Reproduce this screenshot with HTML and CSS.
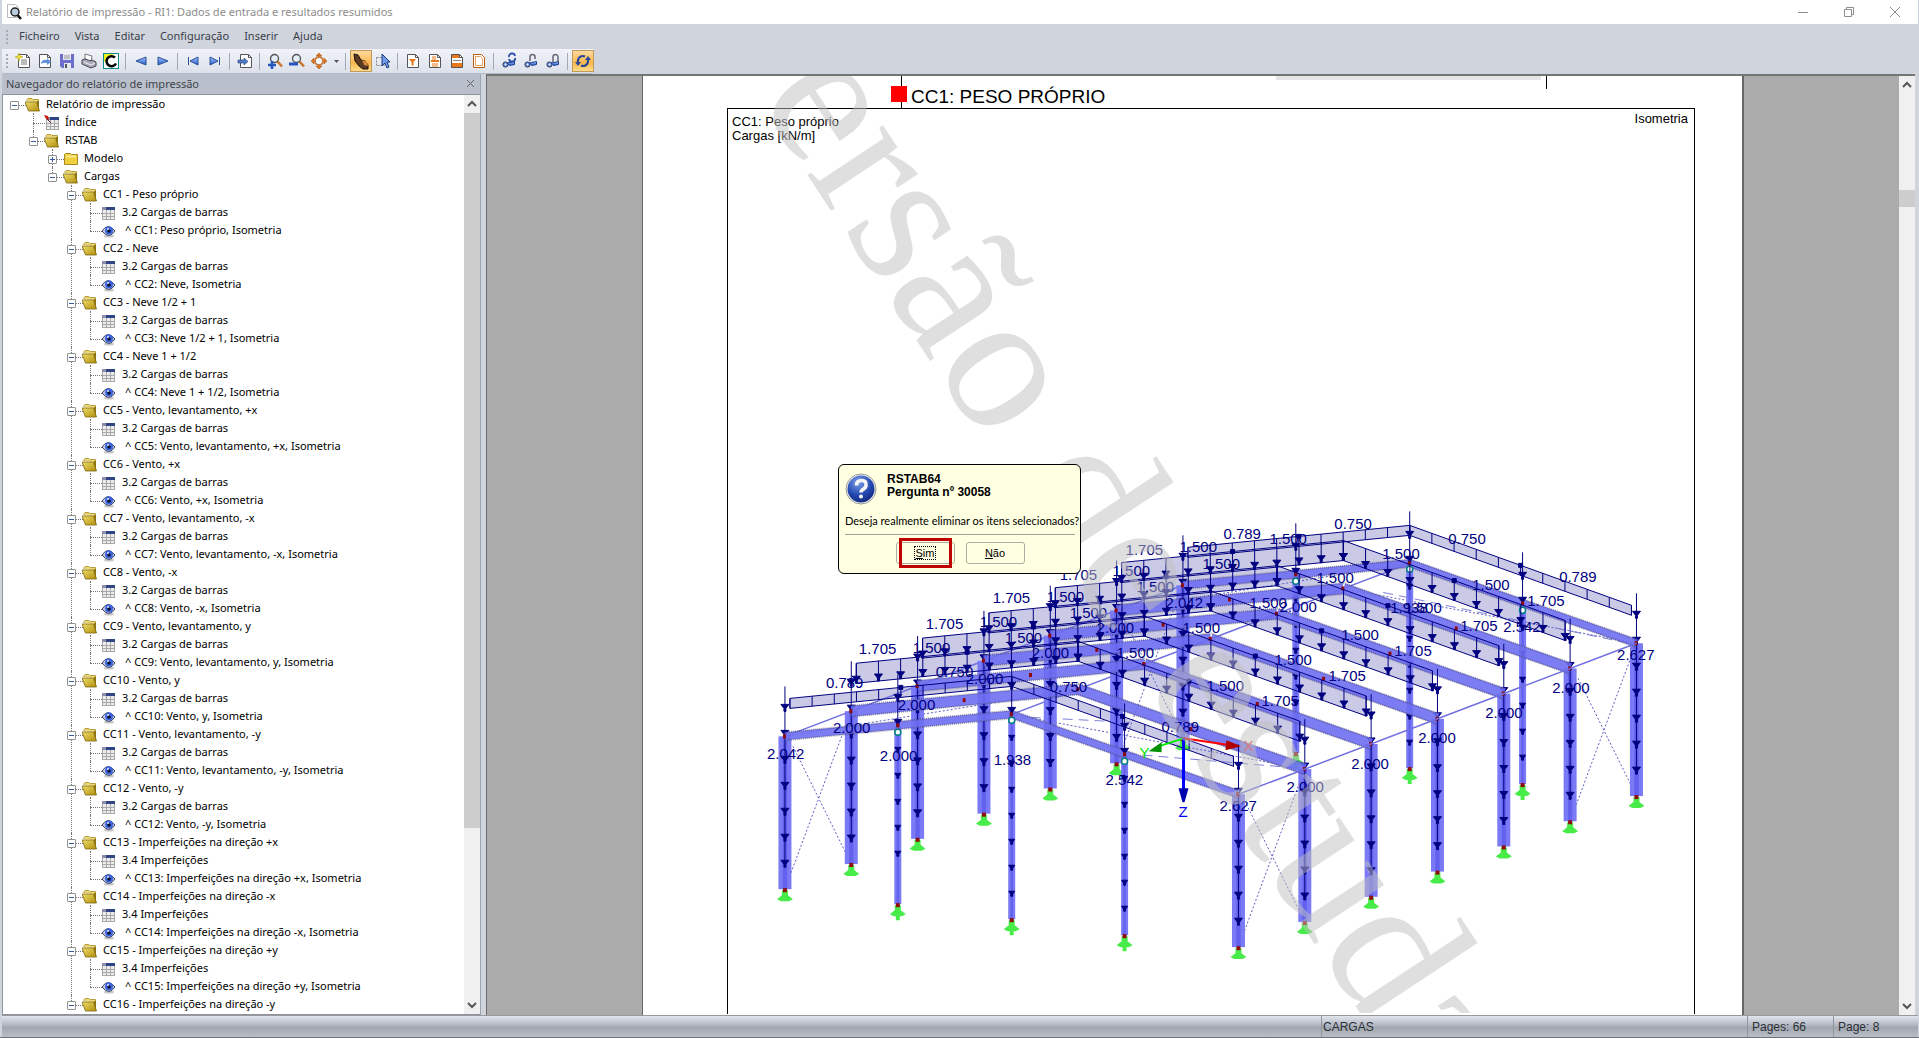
FILE: index.html
```html
<!DOCTYPE html>
<html lang="pt">
<head>
<meta charset="utf-8">
<title>Relatório de impressão</title>
<link rel="stylesheet" href="styles.css">
</head>
<body>
<svg class="sprite" aria-hidden="true">
  <defs>
    <linearGradient id="gold" x1="0" y1="0" x2="1" y2="1"><stop offset="0" stop-color="#f0df6a"/><stop offset="1" stop-color="#b08c0c"/></linearGradient>
    <linearGradient id="blue" x1="0" y1="0" x2="0" y2="1"><stop offset="0" stop-color="#a9c8ff"/><stop offset="1" stop-color="#2458c8"/></linearGradient>
    <radialGradient id="ball" cx=".4" cy=".25" r=".8"><stop offset="0" stop-color="#7f9fea"/><stop offset=".6" stop-color="#2348b0"/><stop offset="1" stop-color="#12277a"/></radialGradient>
  </defs>
  <symbol id="folder-open" viewBox="0 0 16 16"><path d="M2 4V2.500L3 1.500h4l1 1h5.500V5" fill="#ecd66c" stroke="#a58c28" stroke-width=".8"/><path d="M12 4h2v9h-2z" fill="#8f7710"/><path d="M0 5h11.500l3 9H3.500z" fill="url(#gold)" stroke="#7d6710" stroke-width=".8"/></symbol>
  <symbol id="folder" viewBox="0 0 16 16"><path d="M1.500 13.500V3.500l1-1h5l1 1h6v10z" fill="#f0cf3c" stroke="#a88a24"/><path d="M3 5.500h10" stroke="#f9e98f" stroke-width="2"/></symbol>
  <symbol id="table" viewBox="0 0 16 16"><rect x="1" y="2" width="13" height="13" fill="#ececec"/><path d="M5.500 5v10M9.500 5v10M13.500 5v10M1.500 5v10M1 8.500h13M1 11.500h13M1 14.500h13" stroke="#a8a8a8" fill="none"/><path d="M1 2h13v3H1z" fill="#2f4484"/><path d="M1 3.500h4" stroke="#8790a8" stroke-width="3"/></symbol>
  <symbol id="table-pin" viewBox="0 0 16 16"><use href="#table" x="1"/><path d="M0 0l4 1 1 4-3-1z" fill="#d01818"/><path d="M3 4l4 4" stroke="#602020"/></symbol>
  <symbol id="eye" viewBox="0 0 16 16"><ellipse cx="8" cy="13" rx="5" ry="1.500" fill="#c8c8c8"/><path d="M1 8q6-9 13 0q-6 9-13 0z" fill="#c3cbe2" stroke="#3c4660"/><circle cx="8" cy="7.500" r="4" fill="#3f64df"/><circle cx="8" cy="8" r="1.800" fill="#0a1230"/><circle cx="7" cy="6" r="1" fill="#dbe6ff"/></symbol>
  <symbol id="doc" viewBox="0 0 16 16"><path d="M2.500 1.500h8l3 3v10h-11z" fill="#fff" stroke="#555"/><path d="M10.500 1.500v3h3" fill="none" stroke="#555"/></symbol>
  <symbol id="glass" viewBox="0 0 16 16"><circle cx="6.500" cy="5.500" r="4" fill="#e4edf8" stroke="#555" stroke-width="1.400"/><path d="M9.500 8.500l4.500 5" stroke="#c8702c" stroke-width="2.400"/></symbol>
  <symbol id="key" viewBox="0 0 16 16"><circle cx="4.500" cy="11.500" r="2.600" fill="#5588e0" stroke="#333d58"/><circle cx="4.500" cy="11.500" r="1" fill="#fff"/><path d="M6.500 10l7-1.500v3l-5 1z" fill="url(#blue)" stroke="#1c3c90"/></symbol>
</svg>

<div class="window">
  <header class="titlebar">
    <svg class="icon" viewBox="0 0 16 16"><path d="M1.500.5h8l3 3v10h-11z" fill="#fff" stroke="#bbb"/><circle cx="9" cy="8" r="4" fill="#bcd" stroke="#222" stroke-width="1.500"/><path d="M11.500 11l3.500 4" stroke="#111" stroke-width="2.500"/></svg>
    <h1 class="title">Relatório de impressão - RI1: Dados de entrada e resultados resumidos</h1>
    <div class="window-buttons">
      <button aria-label="Minimizar"><svg viewBox="0 0 12 12"><path d="M1 6.500h10"/></svg></button>
      <button aria-label="Restaurar"><svg viewBox="0 0 12 12"><path d="M1.500 3.500h7v7h-7zM3.500 3.500v-2h7v7h-2"/></svg></button>
      <button aria-label="Fechar"><svg viewBox="0 0 12 12"><path d="M1 1l10 10M11 1L1 11"/></svg></button>
    </div>
  </header>

  <nav class="menubar">
    <button>Ficheiro</button><button>Vista</button><button>Editar</button><button>Configuração</button><button>Inserir</button><button>Ajuda</button>
  </nav>

  <div class="toolbar">
    <button aria-label="Novo"><svg viewBox="0 0 16 16"><use href="#doc" x="1"/><path d="M6 7h6M6 9h6M6 11h6" stroke="#777"/><path d="M4 0l1 3 3 1-3 1-1 3-1-3-3-1 3-1z" fill="#f4e22c" stroke="#a89a10" stroke-width=".5"/></svg></button>
    <button aria-label="Abrir"><svg viewBox="0 0 16 16"><use href="#doc"/><path d="M4 11q1-5 6-4V5l4 4-4 3v-2q-3-1-6 1z" fill="#5c8fd8"/></svg></button>
    <button aria-label="Guardar"><svg viewBox="0 0 16 16"><path d="M1 1h14v14H3l-2-2z" fill="#6d6dcc"/><path d="M4 1h8v6H4zM5 10h7v5H5z" fill="#e6e6f2"/><path d="M5 3h6M5 5h6" stroke="#999"/><path d="M6 11h2v4H6z" fill="#555"/></svg></button>
    <button aria-label="Imprimir"><svg viewBox="0 0 16 16"><path d="M4 1l7 2-1 6-6-2z" fill="#fff" stroke="#777"/><path d="M1 7l3-1 6 2 1-1 4 2v4l-5 2-9-4z" fill="#aab" stroke="#445"/><path d="M3 9l7 3 4-2" stroke="#eee" fill="none"/></svg></button>
    <button aria-label="Cores"><svg viewBox="0 0 16 16"><path d="M0 0h16v16H0z" fill="#0e8a8a"/><path d="M1 1h14v14H1z" fill="#fff"/><path d="M1 1h10L1 9z" fill="#f0f020"/><path d="M12 4.500a5 5 0 1 0 1 6" stroke="#000" stroke-width="2.500" fill="none"/></svg></button>
    <span class="sep"></span>
    <button aria-label="Anterior"><svg viewBox="0 0 16 16"><path d="M13 4v8L3 8z" fill="url(#blue)" stroke="#2a4f96"/></svg></button>
    <button aria-label="Seguinte"><svg viewBox="0 0 16 16"><path d="M3 4v8l10-4z" fill="url(#blue)" stroke="#2a4f96"/></svg></button>
    <span class="sep"></span>
    <button aria-label="Primeira"><svg viewBox="0 0 16 16"><path d="M13 4v8L5 8zM3.500 4v8" fill="url(#blue)" stroke="#2a4f96"/></svg></button>
    <button aria-label="Última"><svg viewBox="0 0 16 16"><path d="M3 4v8l8-4zM12.500 4v8" fill="url(#blue)" stroke="#2a4f96"/></svg></button>
    <span class="sep"></span>
    <button aria-label="Ir para página"><svg viewBox="0 0 16 16"><use href="#doc" x="1"/><path d="M1 7h6V5l4 3.500L7 12v-2H1z" fill="#4d7dc8" stroke="#223a70" stroke-width=".6"/></svg></button>
    <span class="sep"></span>
    <button aria-label="Ampliar"><svg viewBox="0 0 16 16"><use href="#glass" x="1"/><path d="M5 8v8M1 12h8" stroke="#2454c0" stroke-width="2.600"/></svg></button>
    <button aria-label="Reduzir"><svg viewBox="0 0 16 16"><use href="#glass" x="1"/><path d="M0 11h9" stroke="#2454c0" stroke-width="3"/></svg></button>
    <button aria-label="Ver tudo"><svg viewBox="0 0 16 16"><path d="M8 0l3 3H5zM8 16l3-3H5zM0 8l3-3v6zM16 8l-3-3v6z" fill="#e07820" stroke="#a04c08" stroke-width=".5"/><circle cx="8" cy="8" r="4" fill="#f4f6fa" stroke="#c87838" stroke-width="1.800"/></svg></button>
    <button class="drop" aria-label="Mais"><svg viewBox="0 0 8 8"><path d="M2 3h5L4.500 6z" fill="#555"/></svg></button>
    <span class="sep"></span>
    <button class="on" aria-label="Mover"><svg viewBox="0 0 16 16"><path d="M1 1l4 1 3 5 4 1 3 4v4h-5l-4-3-4-5z" fill="#5a3a22" stroke="#1e1208"/><path d="M9 7l5 2 1 4-4-1z" fill="#d88c3a"/></svg></button>
    <button aria-label="Selecionar"><svg viewBox="0 0 16 16"><path d="M1.500 4.500h8v8h-8z" fill="none" stroke="#888" stroke-dasharray="2 1"/><path d="M7 1v12l3-3 2 5 2-1-2-5h3z" fill="#6f9be6" stroke="#1e3a80"/></svg></button>
    <span class="sep"></span>
    <button aria-label="Filtro"><svg viewBox="0 0 16 16"><use href="#doc"/><path d="M4 6h7L8.500 9v4l-2-1V9z" fill="#e87818"/></svg></button>
    <button aria-label="Índice"><svg viewBox="0 0 16 16"><use href="#doc"/><path d="M5 4h4M5 6h4M5 11h6M5 13h6" stroke="#e87818"/><path d="M4 8h8" stroke="#e87818" stroke-width="2"/></svg></button>
    <button aria-label="Cabeçalho"><svg viewBox="0 0 16 16"><use href="#doc"/><path d="M3 2h7v3H3zM3 10h10v4H3z" fill="#e87818"/><path d="M4 7.500h8" stroke="#888"/></svg></button>
    <button aria-label="Margens"><svg viewBox="0 0 16 16"><path d="M2.500 1.500h8l3 3v10h-11z" fill="#fff" stroke="#b85c10"/><path d="M4.500 3.500h5l2 2v7h-7z" fill="#fff" stroke="#e8a060"/></svg></button>
    <span class="sep"></span>
    <button aria-label="Atualizar ligação"><svg viewBox="0 0 16 16"><use href="#key"/><path d="M8 4a3 3 0 0 1 6-1M14 5a3 3 0 0 1-6 1" stroke="#2b50a8" stroke-width="1.800" fill="none"/></svg></button>
    <button aria-label="Desbloquear"><svg viewBox="0 0 16 16"><use href="#key"/><path d="M7 8V4a2.500 2.500 0 0 1 5 0v2" stroke="#667" stroke-width="1.500" fill="none"/></svg></button>
    <button aria-label="Bloquear"><svg viewBox="0 0 16 16"><use href="#key"/><path d="M8 9V4a2.500 2.500 0 0 1 5 0v5" stroke="#667" stroke-width="1.500" fill="none"/></svg></button>
    <span class="sep"></span>
    <button class="on" aria-label="Atualizar"><svg viewBox="0 0 16 16"><path d="M3 10V7a5 5 0 0 1 7-3.500M13 6v3a5 5 0 0 1-7 3.500" stroke="#28489a" stroke-width="2.200" fill="none"/><path d="M0 9h6l-3 4zM10 7h6l-3-4z" fill="#28489a"/></svg></button>
  </div>

  <div class="workspace">
    <aside class="navigator">
      <div class="panel-title"><h2>Navegador do relatório de impressão</h2><button aria-label="Fechar painel"><svg viewBox="0 0 12 12"><path d="M2 2l7 7M9 2L2 9"/></svg></button></div>
      <div class="panel-body">
        <ul class="tree">
          <li><div class="row"><button class="exp" aria-label="Recolher"></button><svg><use href="#folder-open"/></svg>Relatório de impressão</div>
            <ul>
              <li><div class="row leaf"><svg><use href="#table-pin"/></svg>Índice</div></li>
              <li><div class="row"><button class="exp" aria-label="Recolher"></button><svg><use href="#folder-open"/></svg>RSTAB</div>
                <ul>
                  <li><div class="row"><button class="exp plus" aria-label="Expandir"></button><svg><use href="#folder"/></svg>Modelo</div></li>
                  <li><div class="row"><button class="exp" aria-label="Recolher"></button><svg><use href="#folder-open"/></svg>Cargas</div>
                    <ul>
                      <li><div class="row"><button class="exp" aria-label="Recolher"></button><svg><use href="#folder-open"/></svg>CC1 - Peso próprio</div><ul><li><div class="row leaf"><svg><use href="#table"/></svg>3.2 Cargas de barras</div></li><li><div class="row leaf view"><svg><use href="#eye"/></svg>^ CC1: Peso próprio, Isometria</div></li></ul></li>
                      <li><div class="row"><button class="exp" aria-label="Recolher"></button><svg><use href="#folder-open"/></svg>CC2 - Neve</div><ul><li><div class="row leaf"><svg><use href="#table"/></svg>3.2 Cargas de barras</div></li><li><div class="row leaf view"><svg><use href="#eye"/></svg>^ CC2: Neve, Isometria</div></li></ul></li>
                      <li><div class="row"><button class="exp" aria-label="Recolher"></button><svg><use href="#folder-open"/></svg>CC3 - Neve 1/2 + 1</div><ul><li><div class="row leaf"><svg><use href="#table"/></svg>3.2 Cargas de barras</div></li><li><div class="row leaf view"><svg><use href="#eye"/></svg>^ CC3: Neve 1/2 + 1, Isometria</div></li></ul></li>
                      <li><div class="row"><button class="exp" aria-label="Recolher"></button><svg><use href="#folder-open"/></svg>CC4 - Neve 1 + 1/2</div><ul><li><div class="row leaf"><svg><use href="#table"/></svg>3.2 Cargas de barras</div></li><li><div class="row leaf view"><svg><use href="#eye"/></svg>^ CC4: Neve 1 + 1/2, Isometria</div></li></ul></li>
                      <li><div class="row"><button class="exp" aria-label="Recolher"></button><svg><use href="#folder-open"/></svg>CC5 - Vento, levantamento, +x</div><ul><li><div class="row leaf"><svg><use href="#table"/></svg>3.2 Cargas de barras</div></li><li><div class="row leaf view"><svg><use href="#eye"/></svg>^ CC5: Vento, levantamento, +x, Isometria</div></li></ul></li>
                      <li><div class="row"><button class="exp" aria-label="Recolher"></button><svg><use href="#folder-open"/></svg>CC6 - Vento, +x</div><ul><li><div class="row leaf"><svg><use href="#table"/></svg>3.2 Cargas de barras</div></li><li><div class="row leaf view"><svg><use href="#eye"/></svg>^ CC6: Vento, +x, Isometria</div></li></ul></li>
                      <li><div class="row"><button class="exp" aria-label="Recolher"></button><svg><use href="#folder-open"/></svg>CC7 - Vento, levantamento, -x</div><ul><li><div class="row leaf"><svg><use href="#table"/></svg>3.2 Cargas de barras</div></li><li><div class="row leaf view"><svg><use href="#eye"/></svg>^ CC7: Vento, levantamento, -x, Isometria</div></li></ul></li>
                      <li><div class="row"><button class="exp" aria-label="Recolher"></button><svg><use href="#folder-open"/></svg>CC8 - Vento, -x</div><ul><li><div class="row leaf"><svg><use href="#table"/></svg>3.2 Cargas de barras</div></li><li><div class="row leaf view"><svg><use href="#eye"/></svg>^ CC8: Vento, -x, Isometria</div></li></ul></li>
                      <li><div class="row"><button class="exp" aria-label="Recolher"></button><svg><use href="#folder-open"/></svg>CC9 - Vento, levantamento, y</div><ul><li><div class="row leaf"><svg><use href="#table"/></svg>3.2 Cargas de barras</div></li><li><div class="row leaf view"><svg><use href="#eye"/></svg>^ CC9: Vento, levantamento, y, Isometria</div></li></ul></li>
                      <li><div class="row"><button class="exp" aria-label="Recolher"></button><svg><use href="#folder-open"/></svg>CC10 - Vento, y</div><ul><li><div class="row leaf"><svg><use href="#table"/></svg>3.2 Cargas de barras</div></li><li><div class="row leaf view"><svg><use href="#eye"/></svg>^ CC10: Vento, y, Isometria</div></li></ul></li>
                      <li><div class="row"><button class="exp" aria-label="Recolher"></button><svg><use href="#folder-open"/></svg>CC11 - Vento, levantamento, -y</div><ul><li><div class="row leaf"><svg><use href="#table"/></svg>3.2 Cargas de barras</div></li><li><div class="row leaf view"><svg><use href="#eye"/></svg>^ CC11: Vento, levantamento, -y, Isometria</div></li></ul></li>
                      <li><div class="row"><button class="exp" aria-label="Recolher"></button><svg><use href="#folder-open"/></svg>CC12 - Vento, -y</div><ul><li><div class="row leaf"><svg><use href="#table"/></svg>3.2 Cargas de barras</div></li><li><div class="row leaf view"><svg><use href="#eye"/></svg>^ CC12: Vento, -y, Isometria</div></li></ul></li>
                      <li><div class="row"><button class="exp" aria-label="Recolher"></button><svg><use href="#folder-open"/></svg>CC13 - Imperfeições na direção +x</div><ul><li><div class="row leaf"><svg><use href="#table"/></svg>3.4 Imperfeições</div></li><li><div class="row leaf view"><svg><use href="#eye"/></svg>^ CC13: Imperfeições na direção +x, Isometria</div></li></ul></li>
                      <li><div class="row"><button class="exp" aria-label="Recolher"></button><svg><use href="#folder-open"/></svg>CC14 - Imperfeições na direção -x</div><ul><li><div class="row leaf"><svg><use href="#table"/></svg>3.4 Imperfeições</div></li><li><div class="row leaf view"><svg><use href="#eye"/></svg>^ CC14: Imperfeições na direção -x, Isometria</div></li></ul></li>
                      <li><div class="row"><button class="exp" aria-label="Recolher"></button><svg><use href="#folder-open"/></svg>CC15 - Imperfeições na direção +y</div><ul><li><div class="row leaf"><svg><use href="#table"/></svg>3.4 Imperfeições</div></li><li><div class="row leaf view"><svg><use href="#eye"/></svg>^ CC15: Imperfeições na direção +y, Isometria</div></li></ul></li>
                      <li><div class="row"><button class="exp" aria-label="Recolher"></button><svg><use href="#folder-open"/></svg>CC16 - Imperfeições na direção -y</div></li>
                    </ul>
                  </li>
                </ul>
              </li>
            </ul>
          </li>
        </ul>
        <div class="scrollbar">
          <svg viewBox="0 0 10 10"><path d="M1 7l4-4 4 4"/></svg>
          <div class="track tree-track"><div class="thumb"></div></div>
          <svg viewBox="0 0 10 10"><path d="M1 3l4 4 4-4"/></svg>
        </div>
      </div>
    </aside>

    <main class="viewer">
      <div class="canvas">
        <article class="page">
          <div class="page-head">
            <div class="rule"><span class="marker"></span></div>
            <h2>CC1: PESO PRÓPRIO</h2>
            <div class="previous"></div>
          </div>
          <figure class="frame">
            <figcaption><span>CC1: Peso próprio<br>Cargas [kN/m]</span><span class="view-name">Isometria</span></figcaption>
            <svg class="model" id="model" viewBox="727 108 967 906" role="img" aria-label="Modelo em isometria"></svg>
          </figure>
          <svg class="watermark" viewBox="643 76 1100 938" aria-hidden="true"><text transform="translate(679 -20) rotate(56.600)">Versão de estudante</text></svg>
        </article>
        <section class="dialog" role="dialog" aria-labelledby="dlg-title">
          <div class="dialog-head">
            <svg viewBox="0 0 32 32"><circle cx="16" cy="16" r="15" fill="#f2f2f2" stroke="#999"/><circle cx="16" cy="16" r="13.500" fill="url(#ball)"/><path d="M11.500 12.500q0-5 5-5t4.500 4.500q0 2.500-2.500 4t-2.500 3.500" fill="none" stroke="#f4f4f4" stroke-width="3.600"/><circle cx="16" cy="23.500" r="2" fill="#f4f4f4"/></svg>
            <h3 id="dlg-title">RSTAB64<br>Pergunta nº 30058</h3>
          </div>
          <p>Deseja realmente eliminar os itens selecionados?</p>
          <div class="dialog-actions">
            <button class="yes"><span><u>S</u>im</span></button>
            <button><u>N</u>ão</button>
          </div>
        </section>
      </div>
      <div class="scrollbar">
        <svg viewBox="0 0 10 10"><path d="M1 7l4-4 4 4"/></svg>
        <div class="track page-track"><div class="thumb"></div></div>
        <svg viewBox="0 0 10 10"><path d="M1 3l4 4 4-4"/></svg>
      </div>
    </main>
  </div>

  <footer class="statusbar"><span class="section">CARGAS</span><span class="pages">Pages: 66</span><span class="current">Page: 8</span></footer>
</div>
<script src="model.js"></script>
</body>
</html>
```
FILE: styles.css
```css
* { box-sizing: border-box; }
body { margin: 0; font: 11px/18px "Noto Sans", "Open Sans", sans-serif; color: #000; }
button { margin: 0; padding: 0; border: 0; background: none; font: inherit; color: inherit; }
h1, h2, h3, p, ul, figure { margin: 0; padding: 0; font-size: inherit; font-weight: normal; }
ul { list-style: none; }
.sprite { position: absolute; width: 0; height: 0; }

.window { display: flex; flex-direction: column; height: 100vh; overflow: hidden; padding: 0 1px 0 2px; background: #d0d4dd; border-bottom: 1px solid #6e7278; }
.titlebar { display: flex; align-items: center; flex: none; height: 24px; padding-left: 4px; background: #fff; color: #8c8c8c; }
.titlebar .icon { width: 16px; height: 16px; margin-right: 4px; }
.title { flex: 1; }
.window-buttons { display: flex; }
.window-buttons button { display: flex; align-items: center; justify-content: center; width: 46px; height: 20px; }
.window-buttons svg { width: 12px; height: 12px; fill: none; stroke: #8c8c8c; }

.menubar { display: flex; gap: 15px; flex: none; height: 25px; padding: 3px 0 4px 17px; color: #3a3f4a; }
.toolbar { display: flex; align-items: center; align-self: flex-start; flex: none; height: 25px; padding-left: 10px; background: linear-gradient(#f0f3f9, #dde1ea); border-bottom: 1px solid #b4b9c6; border-radius: 0 0 3px 3px; }
.menubar::before, .toolbar::before { content: ""; width: 2px; height: 14px; background: linear-gradient(#a4aab8 50%, transparent 50%) 0 0 / 2px 4px; }
.menubar::before { margin: 3px -2px 0 -13px; margin-right: -4px; }
.toolbar::before { margin: 0 4px 0 -6px; }
.toolbar button { display: flex; align-items: center; justify-content: center; width: 22px; height: 22px; }
.toolbar svg { width: 16px; height: 16px; overflow: visible; }
.toolbar .drop { width: 12px; }
.toolbar .drop svg { width: 8px; height: 8px; }
.toolbar .on { background: linear-gradient(#fcd9a0, #fbb74c 60%, #fddc8c); border: 1px solid #c29a58; }
.sep { width: 8px; height: 17px; background: linear-gradient(#a4a9b6, #a4a9b6) 3px 0 / 1px 100% no-repeat; }

.workspace { display: flex; flex: 1; min-height: 0; padding: 0 3px 0 0; }
.navigator { display: flex; flex-direction: column; flex: none; width: 479px; margin-right: 5px; border-right: 1px solid #9da3ae; }
.panel-title { display: flex; align-items: center; justify-content: space-between; flex: none; height: 21px; padding: 0 3px 1px 4px; background: #b9c0cb; border-bottom: 1px solid #8e949f; color: #3f434b; }
.panel-title svg { display: block; width: 12px; height: 12px; fill: none; stroke: #666; }
.panel-body { display: flex; flex: 1; min-height: 0; background: #fff; border-left: 1px solid #8e949f; border-bottom: 1px solid #8e949f; }
.tree { flex: 1; overflow: hidden; padding-left: 7px; }
.tree ul { padding-left: 19px; }
.tree li { position: relative; }
.tree ul > li::before { content: ""; position: absolute; left: 4px; top: 0; bottom: 0; border-left: 1px dotted #777; }
.tree ul > li:last-child::before { bottom: auto; height: 10px; }
.row { position: relative; display: flex; align-items: center; height: 18px; white-space: pre; }
.row::before { content: ""; position: absolute; left: 4px; top: 10px; width: 14px; border-top: 1px dotted #777; }
.row svg { position: relative; width: 16px; height: 16px; margin: 1px 5px 0 3px; }
.row.leaf svg { margin-left: 15px; }
.row.view svg { margin-right: 8px; }
.exp { position: relative; width: 9px; height: 9px; margin: 2px 3px 0 0; border: 1px solid #919191; border-radius: 1px; background: linear-gradient(#3b5aa0, #3b5aa0) center / 5px 1px no-repeat, #fff; }
.exp.plus { background: linear-gradient(#3b5aa0, #3b5aa0) center / 5px 1px no-repeat, linear-gradient(#3b5aa0, #3b5aa0) center / 1px 5px no-repeat, #fff; }

.scrollbar { display: flex; flex-direction: column; align-items: center; flex: none; width: 16px; background: #f0f0f0; }
.scrollbar > svg { width: 10px; height: 10px; margin: 4px 0; fill: none; stroke: #555; stroke-width: 2; }
.track { flex: 1; width: 100%; }
.thumb { width: 100%; background: #cdcdcd; }
.tree-track .thumb { height: 81%; }
.page-track { padding-top: 96px; }
.page-track .thumb { height: 17px; }

.viewer { display: flex; flex: 1; min-width: 0; border: solid #6a6a6a; border-width: 2px 0 0 1px; border-top-color: #757575; }
.canvas { position: relative; flex: 1; min-width: 0; overflow: hidden; background: #ababab; }
.page { position: relative; width: 1102px; min-height: 100%; margin: 0 auto; padding: 0 47px 0 84px; background: #fff; border: solid #666; border-width: 0 2px 0 1px; }
.page-head { display: flex; height: 32px; }
.rule { width: 175px; padding-top: 10px; border-right: 1px solid #000; }
.marker { display: block; width: 16px; height: 16px; margin-left: auto; margin-right: -6px; background: #f00; }
.page-head h2 { flex: 1; padding: 8px 0 0 9px; font: 19px/26px "Liberation Sans", Arial, sans-serif; }
.previous { width: 271px; height: 13px; margin-right: 148px; border-right: 1px solid #000; background: linear-gradient(#e6e6e6, #e6e6e6) 0 0 / 265px 4px no-repeat; }
.frame { position: relative; border: 1px solid #000; border-bottom: 0; }
.frame figcaption { position: absolute; left: 4px; right: 6px; top: 6px; display: flex; justify-content: space-between; font: 13px/14px "Liberation Sans", Arial, sans-serif; }
.frame .view-name { margin-top: -3px; }
.model { display: block; width: 100%; font: 15px "Liberation Sans", Arial, sans-serif; }
.watermark { position: absolute; left: 0; top: 0; width: 100%; overflow: hidden; font: 197px "Liberation Serif", "Times New Roman", serif; font-kerning: none; fill: #c0c0c0; opacity: .5; }

.steel { fill: none; stroke: #6e6ef2; stroke-opacity: .9; }
.column { fill: #7a7af6; }
.column-core { fill: #6262ee; }
.thread { fill: none; stroke: #404048; stroke-dasharray: 1 1; stroke-width: 2; opacity: .45; }
.band { fill: #cacae6; }
.outline { fill: none; stroke: #000080; }
.load { fill: #000080; stroke: #000080; stroke-width: 1; }
.tie { fill: none; stroke: #7070e0; stroke-width: 1.500; }
.brace { fill: none; stroke: #5c5cc8; stroke-dasharray: 2 2; }
.gable { fill: none; stroke: #8080d8; stroke-dasharray: 10 6; }
.support { fill: #48ec48; }
.joint { fill: #900c0c; }
.hinge { fill: #fff; stroke: #008080; stroke-width: 1.500; }
.value { fill: #000080; }

.dialog { position: absolute; left: 351px; top: 388px; width: 243px; padding: 8px 5px 8px 6px; border: 1px solid #000; border-radius: 6px; background: #ffffe1; font: 11px/13px "Liberation Sans", Arial, sans-serif; }
.dialog-head { display: flex; gap: 10px; }
.dialog-head svg { width: 32px; height: 32px; }
.dialog-head h3 { font: bold 12px/13px "Liberation Sans", Arial, sans-serif; }
.dialog p { padding: 9px 0 7px; border-bottom: 1px solid #a0a0a0; font-family: Lato, sans-serif; white-space: nowrap; }
.dialog-actions { display: flex; justify-content: center; gap: 11px; padding: 7px 0 1px; }
.dialog-actions button { position: relative; width: 59px; height: 22px; border: 1px solid #adada4; border-radius: 3px; }
.yes::after { content: ""; position: absolute; inset: -5px 2px; border: 3px solid #c00000; }
.yes span { padding: 0 1px; outline: 1px dotted #000; }

.statusbar { display: flex; align-items: stretch; flex: none; height: 22px; border-top: 1px solid #999; background: linear-gradient(#e2e5ec, #b6bbc7 40%, #a2a8b0 55%, #b9bec7); font: 12px/22px "Liberation Sans", Arial, sans-serif; color: #2c2f36; }
.statusbar span { padding-left: 4px; border-left: 1px solid #8f949d; }
.statusbar .section { margin-left: auto; width: 426px; padding-left: 1px; }
.statusbar .pages { width: 86px; }
.statusbar .current { width: 85px; }
```
FILE: model.js
```js
// Draws the hall frame with its self-weight loads in isometric projection.
const svg = document.getElementById('model');
const NS = 'http://www.w3.org/2000/svg';
const add = (tag, cls, attrs, text) => {
  const el = document.createElementNS(NS, tag);
  el.setAttribute('class', cls);
  for (const k in attrs) el.setAttribute(k, attrs[k]);
  if (text) el.textContent = text;
  svg.appendChild(el);
};
const line = (cls, a, b, w) => add('path', cls, { d: `M${a}L${b}`, ...(w ? { 'stroke-width': w } : {}) });
const head = (x, y, s) => `M${x - s} ${y - s}h${2 * s}l${1 - s} ${s}v${s - 1}h-2v${1 - s}z`;
const at = (p, i) => [p[0] + 66.400 * i, p[1] - 25.200 * i];
const LEFT = [784, 736], RIDGE = [1011, 714], RIGHT = [1238, 794];
const H = 153;

function column(p, h, w, upper) {
  const [x, y] = p;
  add('rect', 'column', { x: x - w / 2, y, width: w, height: h });
  add('rect', 'column-core', { x: x - w / 6, y, width: w / 3, height: h });
  add('path', 'support', { d: `M${x - 3} ${y + h + 1}h6v5l5 4l-4 2h-8l-4-2l5-4z` + (w < 9 ? `M${x - 2} ${y + h + 10}h4v6h-4z` : '') });
  add('rect', 'joint', { x: x - 2, y: y + h - 1, width: 4, height: 4 });
  const s = w < 9 ? 3 : 4;
  let d = '';
  for (let t = upper ? -28 : 24; t < h - 24; t += 26) d += head(x, y + t, s);
  add('path', 'load', { d });
  if (upper) line('load', [x, y - 50], [x, y + h - 27], 1);
}

function rafter(a, b, w) {
  line('steel', a, b, w);
  for (const o of [-w / 2, w / 2]) line('thread', [a[0], a[1] + o], [b[0], b[1] + o]);
}

const bandPath = (a, b, high) => `M${a[0]} ${a[1] - 28}L${b[0]} ${b[1] - 28}v${-high}L${a[0]} ${a[1] - 28 - high}z`;

function bandLoads(a, b, high, heads) {
  const n = 10;
  add('path', 'outline', { d: bandPath(a, b, high) });
  let d = '';
  for (let k = 0; k <= n; k++) {
    const x = a[0] + (b[0] - a[0]) * k / n, y = a[1] + (b[1] - a[1]) * k / n - 28;
    d += `M${x} ${y}v${-high}`;
    if (heads) d += head(x, y - 3, 4);
    if (k === 5) d += `M${x - 2} ${y - high - 2}h4v4h-4z`;
  }
  add('path', 'load', { d });
}

const frames = [6, 5, 4, 3, 2, 1, 0].map(i => ({
  l: at(LEFT, i), m: at(RIDGE, i), r: at(RIGHT, i),
  end: i === 0 || i === 6, high: i === 0 || i === 6 ? 10 : 20
}));

for (const { l, m, r, high } of frames) {
  add('path', 'band', { d: bandPath([l[0] + 5, l[1]], m, high) });
  add('path', 'band', { d: bandPath(m, [r[0] - 5, r[1]], high) });
}
line('tie', LEFT, at(LEFT, 6));
line('tie', RIDGE, at(RIDGE, 6));
for (const i of [0, 5]) {
  for (const p of [LEFT, RIGHT]) {
    const a = at(p, i), b = at(p, i + 1);
    line('brace', [a[0] + 8, a[1] + 10], [b[0], b[1] + H]);
    line('brace', [b[0] - 4, b[1] + 10], [a[0], a[1] + H]);
  }
  line('brace', at(LEFT, i), at(RIDGE, i + 1));
  line('brace', at(RIDGE, i), at(RIGHT, i + 1));
}
line('gable', [1030, 717], [1130, 722]);
line('gable', [1110, 752], [1300, 768]);
line('gable', [1383, 592], [1630, 643]);
for (const { l, m, r, end } of frames) {
  const g1 = [l[0] + 113, l[1] - 10], g3 = [m[0] + 113, m[1] + 41];
  if (end) {
    column(g1, 178, 7, false);
    column(m, 205, 7, false);
    column(g3, 180, 7, false);
  }
  column(l, H, 13, true);
  column(r, H, 13, true);
  rafter(l, m, end ? 8 : 11);
  rafter(m, r, end ? 8 : 11);
  if (end) for (const g of [g1, m, g3]) {
    line('load', [g[0], g[1] - 52], g, 1);
    add('path', 'load', { d: head(g[0], g[1] - 28, 4) + head(g[0], g[1] - 3, 4) });
    add('circle', 'hinge', { cx: g[0], cy: g[1] + 6, r: 3 });
  }
  for (const p of [l, m, r, [(l[0] + m[0]) / 2, (l[1] + m[1]) / 2], [(m[0] + r[0]) / 2, (m[1] + r[1]) / 2]])
    add('rect', 'joint', { x: p[0] - 2, y: p[1] - 2, width: 3, height: 4 });
}
line('tie', RIGHT, at(RIGHT, 6));
for (const { l, m, r, end, high } of frames) {
  bandLoads([l[0] + 5, l[1]], m, high, !end);
  bandLoads(m, [r[0] - 5, r[1]], high, !end);
}

// Global axes at the model origin.
add('path', '', { d: 'M1183 738L1230 745', stroke: '#f00', 'stroke-width': 2 });
add('path', '', { d: 'M1226 740l15 6l-16 4z', fill: '#b00000' });
add('path', '', { d: 'M1183 738L1158 746', stroke: '#0e0', 'stroke-width': 2 });
add('path', '', { d: 'M1161 742l-13 9l13 1z', fill: '#009000' });
add('path', '', { d: 'M1183 738V790', stroke: '#00f', 'stroke-width': 3 });
add('path', '', { d: 'M1178 788h10l-4 14h-2z', fill: '#0000b0' });
add('text', '', { x: 1243, y: 751, fill: '#f03030' }, 'X');
add('text', '', { x: 1139, y: 758, fill: '#00e000' }, 'Y');
add('text', '', { x: 1178, y: 817, fill: '#0000f0' }, 'Z');

const VALUES = [
  ['1.705', [858, 654], [925, 629], [992, 603], [1059, 579], [1125, 554], [1394, 656], [1328, 681], [1261, 706], [1460, 631], [1527, 606]],
  ['1.500', [912, 653], [979, 627], [1046, 602], [1112, 575], [1004, 643], [1069, 618], [1136, 592], [1179, 551], [1202, 568], [1269, 543], [1382, 558], [1316, 582], [1249, 608], [1404, 613], [1182, 633], [1341, 640], [1116, 658], [1274, 665], [1206, 691], [1472, 590]],
  ['0.789', [1223, 538], [1161, 732], [825, 688], [1559, 581]],
  ['0.750', [1334, 528], [935, 677], [1049, 692], [1448, 543]],
  ['2.042', [1165, 608], [766, 759]],
  ['1.938', [1390, 613], [993, 765]],
  ['2.542', [1105, 785], [1503, 632]],
  ['2.627', [1219, 811], [1617, 660]],
  ['2.000', [1279, 612], [1096, 633], [1031, 658], [965, 684], [897, 710], [832, 733], [879, 761], [1286, 792], [1351, 769], [1418, 743], [1485, 718], [1552, 693]]
];
for (const [text, ...spots] of VALUES)
  for (const [x, y] of spots) add('text', 'value', { x, y }, text);
```
